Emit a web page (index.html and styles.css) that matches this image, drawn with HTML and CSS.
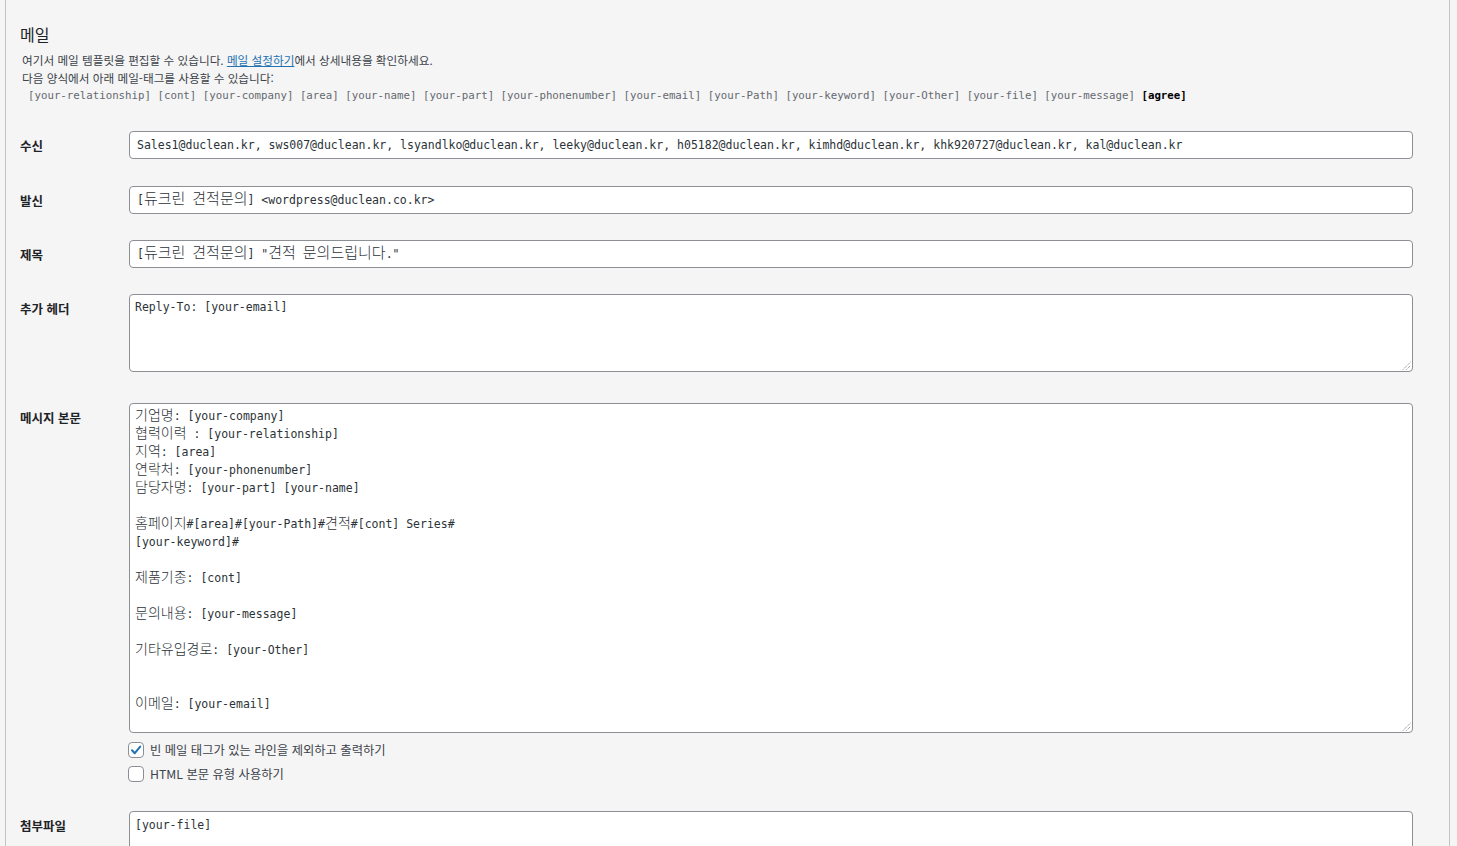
FILE: index.html
```html
<!DOCTYPE html>
<html lang="ko">
<head>
<meta charset="utf-8">
<title>메일</title>
<link rel="stylesheet" href="styles.css">
</head>
<body>
<div class="panel">
  <h2 class="title">메일</h2>
  <div class="desc">
    <p class="line">여기서 메일 템플릿을 편집할 수 있습니다. <a href="#" class="link">메일 설정하기</a>에서 상세내용을 확인하세요.</p>
    <p class="line">다음 양식에서 아래 메일-태그를 사용할 수 있습니다:</p>
    <p class="line tags"><span class="tag">[your-relationship]</span> <span class="tag">[cont]</span> <span class="tag">[your-company]</span> <span class="tag">[area]</span> <span class="tag">[your-name]</span> <span class="tag">[your-part]</span> <span class="tag">[your-phonenumber]</span> <span class="tag">[your-email]</span> <span class="tag">[your-Path]</span> <span class="tag">[your-keyword]</span> <span class="tag">[your-Other]</span> <span class="tag">[your-file]</span> <span class="tag">[your-message]</span> <span class="tag strong">[agree]</span></p>
  </div>

  <div class="row row-first">
    <div class="label">수신</div>
    <div class="field"><div class="input"><span class="val">Sales1@duclean.kr, sws007@duclean.kr, lsyandlko@duclean.kr, leeky@duclean.kr, h05182@duclean.kr, kimhd@duclean.kr, khk920727@duclean.kr, kal@duclean.kr</span></div></div>
  </div>

  <div class="row row-gap27">
    <div class="label">발신</div>
    <div class="field"><div class="input"><span class="val">[<span class="ko">듀크린</span> <span class="ko">견적문의</span>] &lt;wordpress@duclean.co.kr&gt;</span></div></div>
  </div>

  <div class="row row-gap26">
    <div class="label">제목</div>
    <div class="field"><div class="input"><span class="val">[<span class="ko">듀크린</span> <span class="ko">견적문의</span>] "<span class="ko">견적</span> <span class="ko">문의드립니다</span>."</span></div></div>
  </div>

  <div class="row row-gap26">
    <div class="label">추가 헤더</div>
    <div class="field"><div class="ta ta-header">Reply-To: [your-email]<svg class="grip" width="9" height="9" viewBox="0 0 9 9"><path d="M1 8.5L8.5 1M4.5 8.5L8.5 4.5" stroke="#777" stroke-width="1" stroke-dasharray="1 1"/></svg></div></div>
  </div>

  <div class="row row-gap31">
    <div class="label">메시지 본문</div>
    <div class="field">
      <div class="ta ta-body"><span class="ko2">기업명</span>: [your-company]
<span class="ko2">협력이력</span> : [your-relationship]
<span class="ko2">지역</span>: [area]
<span class="ko2">연락처</span>: [your-phonenumber]
<span class="ko2">담당자명</span>: [your-part] [your-name]

<span class="ko2">홈페이지</span>#[area]#[your-Path]#<span class="ko2">견적</span>#[cont] Series#
[your-keyword]#

<span class="ko2">제품기종</span>: [cont]

<span class="ko2">문의내용</span>: [your-message]

<span class="ko2">기타유입경로</span>: [your-Other]


<span class="ko2">이메일</span>: [your-email]<svg class="grip" width="9" height="9" viewBox="0 0 9 9"><path d="M1 8.5L8.5 1M4.5 8.5L8.5 4.5" stroke="#777" stroke-width="1" stroke-dasharray="1 1"/></svg></div>
      <label class="check check-first"><span class="box checked"><svg width="14" height="14" viewBox="0 0 14 14"><path d="M3 7.2L5.8 10.2L11.2 3.6" fill="none" stroke="#2271b1" stroke-width="2" stroke-linecap="round" stroke-linejoin="round"/></svg></span><span class="check-text">빈 메일 태그가 있는 라인을 제외하고 출력하기</span></label>
      <label class="check check-second"><span class="box"></span><span class="check-text">HTML 본문 유형 사용하기</span></label>
    </div>
  </div>

  <div class="row row-gap29">
    <div class="label">첨부파일</div>
    <div class="field"><div class="ta ta-file">[your-file]</div></div>
  </div>
</div>
</body>
</html>
```

FILE: styles.css
```css
html, body {
  margin: 0;
  padding: 0;
}
body {
  background: #f5f5f5;
  font-family: "Noto Sans CJK KR", "Noto Sans", sans-serif;
  color: #1d2327;
  overflow: hidden;
}
.panel {
  margin: 0 7px 0 5px;
  border-left: 1px solid #c3c4c7;
  border-right: 1px solid #c3c4c7;
  min-height: 100vh;
  padding: 24px 35px 0 14px;
  background: #f5f5f5;
}
.title {
  margin: 0;
  font-size: 16px;
  font-weight: 400;
  line-height: 20px;
  color: #1d2327;
}
.desc {
  margin-top: 7px;
  padding-left: 2px;
}
.line {
  margin: 0;
  font-size: 11.65px;
  line-height: 18px;
  color: #3c434a;
}
.link {
  color: #2271b1;
  text-decoration: underline;
}
.tags {
  padding-left: 6px;
  font-family: "DejaVu Sans Mono", monospace;
  font-size: 10.75px;
  color: #646970;
  white-space: nowrap;
}
.tag.strong {
  color: #000;
  font-weight: 700;
}
.row {
  display: grid;
  grid-template-columns: 109px 1284px;
}
.row-first { margin-top: 26px; }
.row-gap27 { margin-top: 27px; }
.row-gap26 { margin-top: 26px; }
.row-gap31 { margin-top: 31px; }
.row-gap29 { margin-top: 29px; }
.label {
  padding-top: 6px;
  font-size: 12.5px;
  font-weight: 700;
  line-height: 17px;
  color: #1d2327;
}
.field {
  display: flex;
  flex-direction: column;
}
.input {
  box-sizing: border-box;
  height: 28px;
  border: 1px solid #8c8f94;
  border-radius: 4px;
  background: #fff;
  padding: 0 7px;
  display: flex;
  align-items: center;
  font-family: "DejaVu Sans Mono", monospace;
  font-size: 11.5px;
  color: #2c3338;
  overflow: hidden;
}
.val {
  white-space: pre;
  line-height: 18px;
}
.ko {
  font-family: "Noto Sans CJK KR", sans-serif;
  font-size: 15px;
  font-weight: 300;
  line-height: 10px;
}
.ta {
  position: relative;
  box-sizing: border-box;
  border: 1px solid #8c8f94;
  border-radius: 4px;
  background: #fff;
  padding: 3px 5px;
  font-family: "DejaVu Sans Mono", monospace;
  font-size: 11.5px;
  line-height: 18px;
  color: #2c3338;
  white-space: pre-wrap;
  overflow: hidden;
}
.ko2 {
  font-family: "Noto Sans CJK KR", sans-serif;
  font-size: 14px;
  font-weight: 300;
  line-height: 10px;
}
.ta-header {
  height: 78px;
}
.ta-body {
  height: 330px;
  padding-top: 3px;
}
.ta-file {
  height: 78px;
  padding-top: 4px;
}
.grip {
  position: absolute;
  right: 1px;
  bottom: 1px;
}
.check {
  display: flex;
  align-items: center;
  gap: 6px;
  margin-left: -1px;
  height: 16px;
}
.check-first { margin-top: 9px; }
.check-second { margin-top: 8px; }
.box {
  box-sizing: border-box;
  width: 16px;
  height: 16px;
  border: 1px solid #8c8f94;
  border-radius: 4px;
  background: #fff;
  display: flex;
  align-items: center;
  justify-content: center;
}
.check-text {
  font-size: 12.3px;
  line-height: 16px;
  color: #3c434a;
}
```
